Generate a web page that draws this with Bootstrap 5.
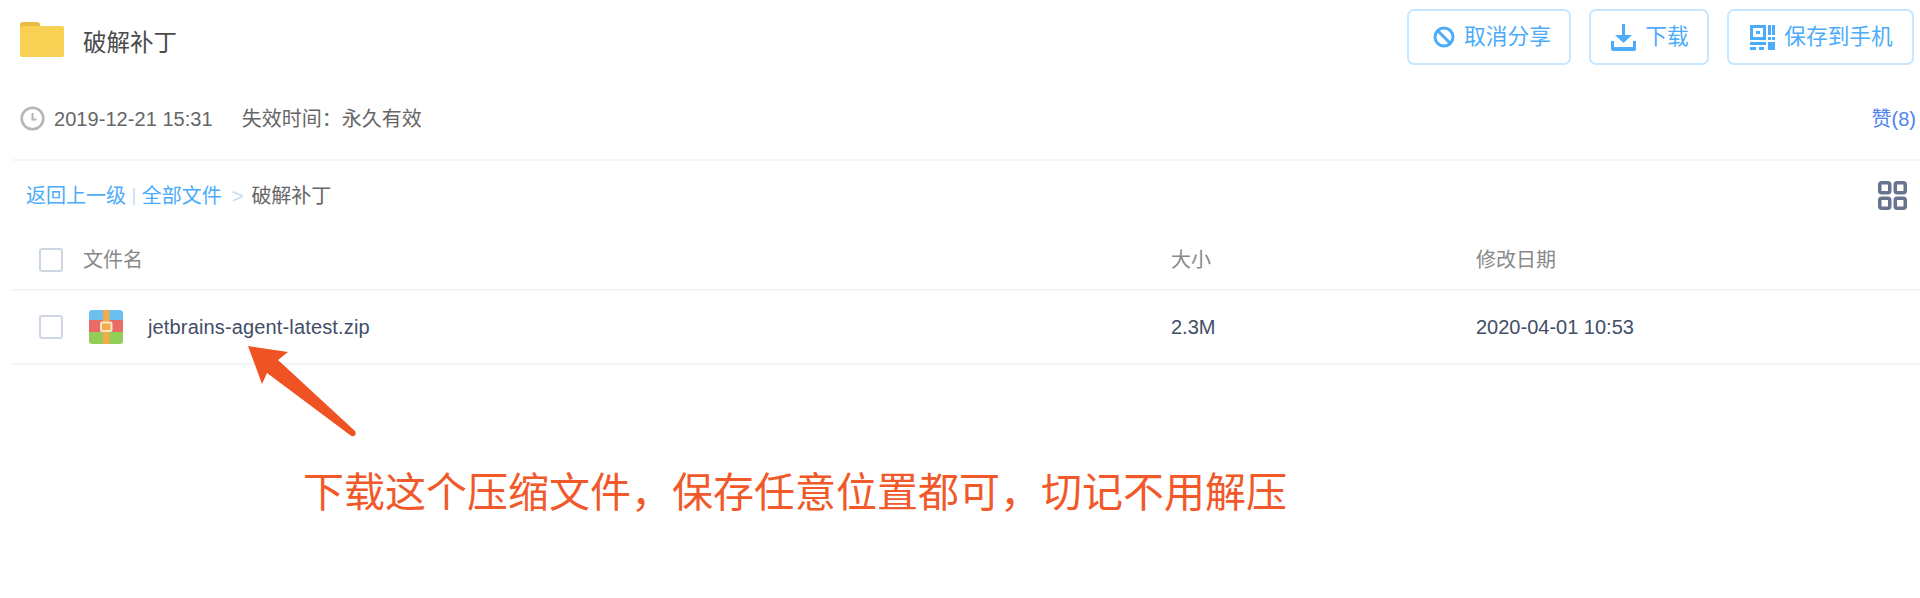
<!DOCTYPE html>
<html lang="zh-CN">
<head>
    <meta charset="UTF-8">
    <title>破解补丁</title>
    <link href="https://cdn.jsdelivr.net/npm/bootstrap@5.3.2/dist/css/bootstrap.min.css" rel="stylesheet">
    <script src="https://cdn.jsdelivr.net/npm/bootstrap@5.3.2/dist/js/bootstrap.bundle.min.js"></script>
    <style>
        html, body { height: 100%; overflow: hidden; }
        body { background: #fff; font-family: "Liberation Sans", "Noto Sans CJK SC", sans-serif; font-size: 20px; color: #666; position: relative; }
        a { text-decoration: none; }

        .top-bar { height: 86px; padding: 9px 6px 0 20px; }
        .folder-ico { width: 44px; height: 35px; margin-top: 13px; }
        .share-name { font-size: 23.500px; margin: 20px 0 0 19px; line-height: 28px; color: #4a4a4a; }
        .act-btn { height: 56px; border: 2px solid #c7e6ff; border-radius: 7px; color: #4cacfa; background: #fff; font-size: 21.700px; padding: 0; gap: 9px; }
        .act-btn:hover { color: #4cacfa; border-color: #c7e6ff; }
        .btn-cancel { width: 164px; margin-right: 18px; padding-left: 6px; }
        .btn-down { width: 120px; margin-right: 18px; padding-left: 2px; }
        .btn-phone { width: 187px; padding-left: 2px; }

        .meta-bar { height: 75px; padding: 0 4px 8px 8px; border-bottom: 2px solid #f5f6f8; margin-left: 12px; }
        .meta-date { margin: 0 29px 0 9px; letter-spacing: .05px; }
        .like-link { color: #4f82f0; }

        .crumb-bar { height: 69px; padding: 0 13px 0 14px; margin-left: 12px; }
        .crumb-bar a { color: #4cacfa; }
        .crumb-sep { color: #c5dcf5; margin: 0 5.500px; font-size: 18px; }
        .crumb-gt { color: #c5d9f2; margin: 0 8px 0 10px; }

        .file-head, .file-row { margin-left: 12px; border-bottom: 2px solid #f3f5f9; padding-left: 27px; }
        .file-head { height: 61px; color: #888; }
        .file-row { height: 74px; color: #424e67; }
        .check-box { width: 24px; height: 24px; border: 2px solid #ced6e4; border-radius: 3px; flex: none; background: #fff; }
        .col-name { width: 1108px; flex: none; }
        .col-size { width: 305px; flex: none; }
        .file-head .col-name { padding-left: 20px; }
        .zip-ico { width: 34px; height: 34px; margin: 0 25px 0 26px; }
        .zip-name { letter-spacing: .15px; }
        .note-text { color: #f1592a; font-size: 41px; line-height: 50px; margin: 103px 0 0 303px; white-space: nowrap; }
        .note-arrow { position: absolute; left: 240px; top: 340px; width: 125px; height: 105px; }
    </style>
</head>
<body>
    <div class="top-bar d-flex">
        <svg class="folder-ico" viewBox="0 0 44 35">
            <path d="M0 3a3 3 0 0 1 3-3h14a3 3 0 0 1 3 3v2H0z" fill="#e9bb45"/>
            <path d="M0 6a2 2 0 0 1 2-2h40a2 2 0 0 1 2 2v27a2 2 0 0 1-2 2H2a2 2 0 0 1-2-2z" fill="#f8d054"/>
        </svg>
        <div class="share-name">破解补丁</div>
        <div class="ms-auto d-flex align-items-start">
            <a href="#" class="btn act-btn btn-cancel d-flex align-items-center justify-content-center">
                <svg width="22" height="22" viewBox="0 0 22 22" fill="none" stroke="#4cacfa" stroke-width="3"><circle cx="11" cy="11" r="9"/><path d="M5 5l12 12"/></svg>
                取消分享
            </a>
            <a href="#" class="btn act-btn btn-down d-flex align-items-center justify-content-center">
                <svg width="25" height="27" viewBox="0 0 25 27" fill="#4cacfa"><path d="M11 0h3v11h7l-8.500 8-8.500-8h7z"/><path d="M0 17h3v6h19v-6h3v8a2 2 0 0 1-2 2H2a2 2 0 0 1-2-2z"/></svg>
                下载
            </a>
            <a href="#" class="btn act-btn btn-phone d-flex align-items-center justify-content-center">
                <svg width="25" height="25" viewBox="0 0 25 25" fill="#4cacfa"><path fill-rule="evenodd" d="M0 0h16v15H0zM3 3v9h10V3z"/><path d="M6 6h4v3H6zM18 0h3v10h-3zM22 0h3v10h-3zM22 12h3v3h-3zM18 12h3v3h-3zM0 17h16v3H0zM0 22h6v3H0zM9 22h5v3H9zM18 17h7v8h-7z"/></svg>
                保存到手机
            </a>
        </div>
    </div>

    <div class="meta-bar d-flex align-items-center">
        <svg width="25" height="25" viewBox="0 0 25 25" fill="none" stroke="#b5b5b5"><circle cx="12.500" cy="12.500" r="10.800" stroke-width="2.600"/><path d="M12.500 7v6.500h4" stroke-width="2"/></svg>
        <span class="meta-date">2019-12-21 15:31</span>
        <span>失效时间：永久有效</span>
        <a href="#" class="like-link ms-auto">赞(8)</a>
    </div>

    <div class="crumb-bar d-flex align-items-center">
        <a href="#">返回上一级</a><span class="crumb-sep">|</span><a href="#">全部文件</a><span class="crumb-gt">&gt;</span><span>破解补丁</span>
        <svg class="ms-auto" width="29" height="29" viewBox="0 0 29 29" fill="none" stroke="#68738f" stroke-width="3.500"><rect x="1.750" y="1.750" width="10" height="10" rx="2"/><rect x="17.250" y="1.750" width="10" height="10" rx="2"/><rect x="1.750" y="17.250" width="10" height="10" rx="2"/><rect x="17.250" y="17.250" width="10" height="10" rx="2"/></svg>
    </div>

    <div class="file-head d-flex align-items-center">
        <div class="check-box"></div>
        <div class="col-name">文件名</div>
        <div class="col-size">大小</div>
        <div>修改日期</div>
    </div>

    <div class="file-row d-flex align-items-center">
        <div class="check-box"></div>
        <div class="col-name d-flex align-items-center">
            <svg class="zip-ico" viewBox="0 0 34 34">
                <path d="M0 3a3 3 0 0 1 3-3h28a3 3 0 0 1 3 3v8H0z" fill="#6cc0f0"/>
                <rect y="10" width="34" height="13" fill="#ea6b66"/>
                <path d="M0 22h34v9a3 3 0 0 1-3 3H3a3 3 0 0 1-3-3z" fill="#92cd57"/>
                <rect x="14" width="6.500" height="34" fill="#f2ac4c"/>
                <rect x="12" y="12.500" width="10.500" height="8.500" rx="1" fill="#f2ac4c" stroke="#fbe6c8" stroke-width="2"/>
            </svg>
            <span class="zip-name">jetbrains-agent-latest.zip</span>
        </div>
        <div class="col-size">2.3M</div>
        <div>2020-04-01 10:53</div>
    </div>

    <div class="note-text">下载这个压缩文件，保存任意位置都可，切记不用解压</div>

    <svg class="note-arrow" viewBox="240 340 125 105">
        <path d="M248 346L288 352L278 360L355 431Q357 434 354 436Q352 437 350 435L267 373L262 384Z" fill="#f05323"/>
    </svg>
</body>
</html>
